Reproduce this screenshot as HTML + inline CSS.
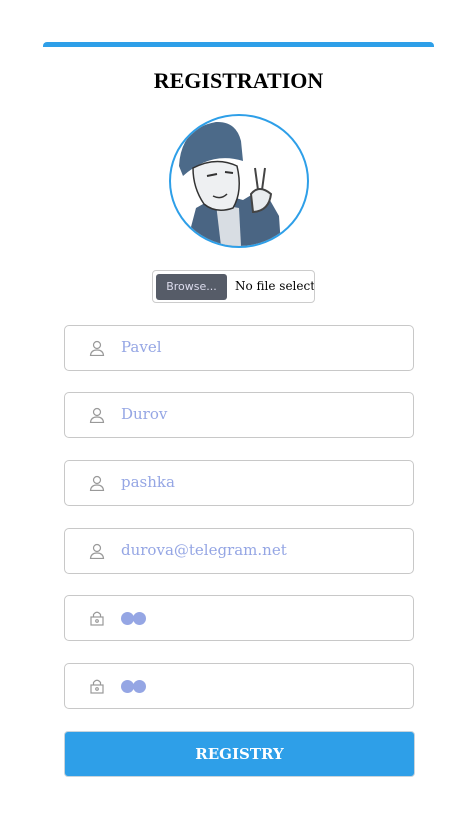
<!DOCTYPE html>
<html><head><style>
body{margin:0;width:461px;height:815px;background:#fff;position:relative;overflow:hidden;font-family:"Liberation Serif",serif}
.bar{position:absolute;left:43px;top:42px;width:391px;height:5px;background:#2e9fe8;border-radius:4px 4px 0 0}
h1{position:absolute;left:0;width:477px;top:68px;margin:0;text-align:center;font-size:22px;font-weight:bold;color:#000}
.av{position:absolute;left:169px;top:114px;width:136px;height:130px;border:2px solid #2e9fe8;border-radius:50%;overflow:hidden;background:#fff}
.file{position:absolute;left:152px;top:270px;width:161px;height:31px;border:1px solid #ccc;border-radius:4px;overflow:hidden;white-space:nowrap}
.file .b{position:absolute;left:3px;top:3px;width:71px;height:26px;background:#565c68;border-radius:3px;color:#dde;font:11px "DejaVu Sans",sans-serif;line-height:26px;text-align:center}
.file .t{position:absolute;left:82px;top:8px;font:12px "DejaVu Serif",serif;color:#000}
.in{position:absolute;left:64px;width:348px;height:44px;border:1px solid #c8c8c8;border-radius:5px}
.in svg{position:absolute;left:24px;top:14px}
.in span{position:absolute;left:56px;top:12px;font:15px "DejaVu Serif",serif;color:#95a6e4}
.dots{position:absolute;left:56px;top:16px}
.dots i{display:inline-block;width:13px;height:13px;border-radius:50%;background:#95a6e4;margin-right:-1px}
.btn{position:absolute;left:64px;top:731px;width:349px;height:44px;background:#2e9fe8;border:1px solid #c8d4dc;border-radius:4px;color:#fff;font:bold 15px "DejaVu Serif",serif;text-align:center;line-height:44px}
</style></head><body>
<div class="bar"></div>
<h1>REGISTRATION</h1>
<div class="av"><svg width="136" height="130" viewBox="0 0 136 130">
<path d="M15 130 L25 92 L50 78 L72 84 L92 72 L108 100 L110 130Z" fill="#4a6583"/>
<path d="M45 88 L68 92 L70 130 L50 130Z" fill="#d8dde3"/>
<path d="M8 50 Q10 12 45 6 Q65 5 70 25 L72 45 Q40 35 12 60Z" fill="#4c6a89"/>
<path d="M22 52 Q45 40 66 50 Q72 75 62 92 Q45 98 33 88 Q22 72 22 52Z" fill="#eef0f2" stroke="#333" stroke-width="1.5"/>
<path d="M36 60 L46 58 M54 56 L62 57" stroke="#333" stroke-width="2"/>
<path d="M42 80 Q50 84 56 78" stroke="#333" stroke-width="1.5" fill="none"/>
<path d="M84 52 L87 74 M94 52 L91 74 M80 78 Q88 68 100 78 Q98 95 82 96Z" stroke="#444" stroke-width="2" fill="#e9ecef"/>
</svg></div>
<div class="file"><div class="b">Browse...</div><div class="t">No file selected</div></div>

<div class="in" style="top:325px"><svg width="16" height="16" viewBox="0 0 16 16" fill="none" stroke="#999" stroke-width="1.2"><circle cx="8" cy="5" r="3.5"/><path d="M1.5 15.5 Q2 10 8 10 Q14 10 14.5 15.5Z"/></svg><span>Pavel</span></div>
<div class="in" style="top:392px"><svg width="16" height="16" viewBox="0 0 16 16" fill="none" stroke="#999" stroke-width="1.2"><circle cx="8" cy="5" r="3.5"/><path d="M1.5 15.5 Q2 10 8 10 Q14 10 14.5 15.5Z"/></svg><span>Durov</span></div>
<div class="in" style="top:460px"><svg width="16" height="16" viewBox="0 0 16 16" fill="none" stroke="#999" stroke-width="1.2"><circle cx="8" cy="5" r="3.5"/><path d="M1.5 15.5 Q2 10 8 10 Q14 10 14.5 15.5Z"/></svg><span>pashka</span></div>
<div class="in" style="top:528px"><svg width="16" height="16" viewBox="0 0 16 16" fill="none" stroke="#999" stroke-width="1.2"><circle cx="8" cy="5" r="3.5"/><path d="M1.5 15.5 Q2 10 8 10 Q14 10 14.5 15.5Z"/></svg><span>durova@telegram.net</span></div>
<div class="in" style="top:595px"><svg width="16" height="16" viewBox="0 0 16 16" fill="none" stroke="#999" stroke-width="1.2"><path d="M4.5 7 V4.5 Q8 0 11.5 4.5 V7"/><rect x="2" y="7" width="12" height="8"/><circle cx="8" cy="11" r="1.3"/></svg><div class="dots"><i></i><i></i></div></div>
<div class="in" style="top:663px"><svg width="16" height="16" viewBox="0 0 16 16" fill="none" stroke="#999" stroke-width="1.2"><path d="M4.5 7 V4.5 Q8 0 11.5 4.5 V7"/><rect x="2" y="7" width="12" height="8"/><circle cx="8" cy="11" r="1.3"/></svg><div class="dots"><i></i><i></i></div></div>
<div class="btn">REGISTRY</div>
</body></html>
